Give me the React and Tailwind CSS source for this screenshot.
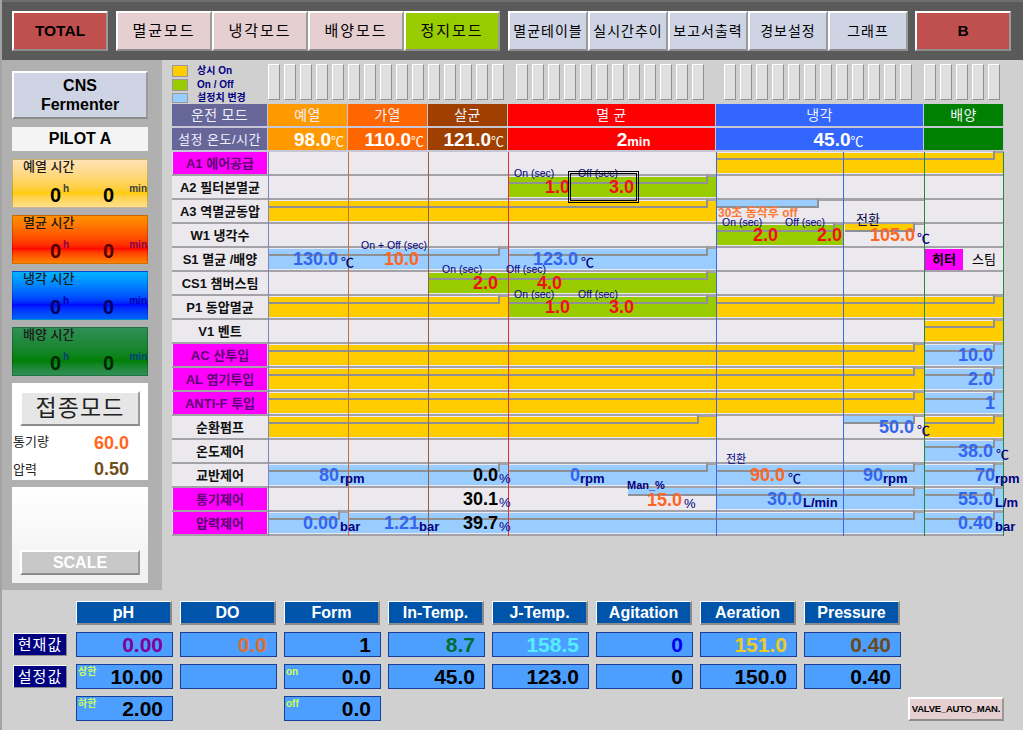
import clsx from 'clsx';

const AMBER = 'bg-[#ffcc00]';
const GREEN = 'bg-[#99cc00]';
const BLUE = 'bg-[#99ccff]';
const RAISED = 'border-2 border-t-white border-l-white border-r-[#9a9a9a] border-b-[#8c8c8c]';

// right-hand step of a process line: offset of the riser and width of the top run
const STEP = {
  8: ['right-2', 'w-2'],
  9: ['right-[9px]', 'w-[9px]'],
  17: ['right-[17px]', 'w-[17px]'],
  105: ['right-[105px]', 'w-[105px]'],
};

const Seg = ({ span, fill, strip, stripLeft = 'left-0', notch, line = false }) => {
  const step = notch ? STEP[notch] : null;
  return (
    <div className={clsx('relative h-6 border-b-2 border-[#a2a2a8] bg-[#ebe9ee]', span)}>
      {fill && <div className={clsx('absolute inset-x-0 top-px bottom-px', fill)} />}
      {strip && <div className={clsx('absolute top-0 h-1.5', stripLeft, step ? step[0] : 'right-0', strip)} />}
      {(step || line) && (
        <div className={clsx('absolute top-1.5 h-0.5 bg-[#8f8f96]', stripLeft, step ? step[0] : 'right-0')} />
      )}
      {step && (
        <>
          <div className={clsx('absolute -top-px h-[9px] w-0.5 bg-[#8f8f96]', step[0])} />
          <div className={clsx('absolute -top-px right-0 h-0.5 bg-[#a2a2a8]', step[1])} />
        </>
      )}
    </div>
  );
};

const rows = [
  { label: 'A1 에어공급', hot: true, segs: [{ span: 'col-span-4' }, { span: 'col-span-3', fill: AMBER, notch: 9 }] },
  { label: 'A2 필터본멸균', segs: [{ span: 'col-span-3' }, { span: 'col-span-1', fill: GREEN, notch: 8 }, { span: 'col-span-3' }] },
  {
    label: 'A3 역멸균동압',
    segs: [
      { span: 'col-span-4', fill: AMBER, notch: 8 },
      { span: 'col-span-2', strip: BLUE, notch: 105 },
      { span: 'col-span-1' },
    ],
  },
  {
    label: 'W1 냉각수',
    segs: [
      { span: 'col-span-4' },
      { span: 'col-span-1', fill: GREEN, notch: 8 },
      { span: 'col-span-1', strip: AMBER, stripLeft: 'left-0.5', notch: 9 },
      { span: 'col-span-1' },
    ],
  },
  {
    label: 'S1 멸균 /배양',
    heater: true,
    segs: [
      { span: 'col-span-3', fill: BLUE, notch: 8 },
      { span: 'col-span-1', fill: BLUE, notch: 8 },
      { span: 'col-span-2' },
    ],
  },
  { label: 'CS1 챔버스팀', segs: [{ span: 'col-span-2' }, { span: 'col-span-2', fill: GREEN, notch: 8 }, { span: 'col-span-3' }] },
  {
    label: 'P1 동압멸균',
    segs: [
      { span: 'col-span-3', fill: AMBER, notch: 8 },
      { span: 'col-span-1', fill: GREEN, notch: 8 },
      { span: 'col-span-3', fill: AMBER, notch: 9 },
    ],
  },
  { label: 'V1 벤트', segs: [{ span: 'col-span-6' }, { span: 'col-span-1', fill: AMBER, notch: 9 }] },
  { label: 'AC 산투입', hot: true, segs: [{ span: 'col-span-6', fill: AMBER, notch: 9 }, { span: 'col-span-1', fill: BLUE, notch: 9 }] },
  { label: 'AL 염기투입', hot: true, segs: [{ span: 'col-span-6', fill: AMBER, notch: 9 }, { span: 'col-span-1', fill: BLUE, notch: 9 }] },
  { label: 'ANTI-F 투입', hot: true, segs: [{ span: 'col-span-6', fill: AMBER, notch: 9 }, { span: 'col-span-1', fill: BLUE, notch: 9 }] },
  {
    label: '순환펌프',
    segs: [
      { span: 'col-span-4', fill: AMBER, notch: 17 },
      { span: 'col-span-1' },
      { span: 'col-span-1', strip: BLUE, notch: 9 },
      { span: 'col-span-1', fill: AMBER, notch: 9 },
    ],
  },
  { label: '온도제어', segs: [{ span: 'col-span-6' }, { span: 'col-span-1', fill: BLUE, notch: 9 }] },
  {
    label: '교반제어',
    segs: [
      { span: 'col-span-3', fill: BLUE, notch: 8 },
      { span: 'col-span-1', fill: BLUE, notch: 8 },
      { span: 'col-span-2', fill: BLUE, notch: 9 },
      { span: 'col-span-1', fill: BLUE, notch: 9 },
    ],
  },
  {
    label: '통기제어',
    hot: true,
    segs: [
      { span: 'col-span-3' },
      { span: 'col-span-1', strip: BLUE, stripLeft: 'left-[120px]' , line: true },
      { span: 'col-span-2', fill: BLUE, notch: 9 },
      { span: 'col-span-1', fill: BLUE, notch: 9 },
    ],
  },
  {
    label: '압력제어',
    hot: true,
    segs: [
      { span: 'col-span-1', fill: BLUE, notch: 8 },
      { span: 'col-span-3', fill: BLUE, line: true },
      { span: 'col-span-2', fill: BLUE, notch: 9 },
      { span: 'col-span-1', fill: BLUE, notch: 9 },
    ],
  },
];

const dividers = [
  'left-[96px] bg-[#7f84c4]',
  'left-[176px] bg-[#c4703a]',
  'left-[256px] bg-[#94603c]',
  'left-[336px] bg-[#e03030]',
  'left-[544px] bg-[#3f66e8]',
  'left-[671px] bg-[#3f66e8]',
  'left-[752px] bg-[#1f8a3c]',
  'left-[831px] bg-[#1f8a3c]',
];

const SEC = 'text-[10.5px] leading-3 text-[#000080]';
const UNIT = 'text-[13px] leading-none font-bold text-[#000080]';
const DEG = 'text-[13px] leading-none font-medium text-[#000080]';
const NUM = 'text-[18px] leading-none font-bold';
const RED = `${NUM} text-[#ee1111]`;
const SET = `${NUM} text-[#3366ee]`;
const HOT = `${NUM} text-[#ff6622]`;
const BLK = `${NUM} text-black`;

// labels and readings that sit on top of the process lines
const tags = [
  ['left-[342px] top-[63px]', SEC, 'On (sec)'],
  ['left-[406px] top-[63px]', SEC, 'Off (sec)'],
  ['left-[373px] top-[74px]', RED, '1.0'],
  ['left-[437px] top-[74px]', RED, '3.0'],
  ['left-[546px] top-[103px]', 'text-[12px] leading-none font-bold text-[#ff7733]', '30초 동작후 off'],
  ['left-[550px] top-[112px]', SEC, 'On (sec)'],
  ['left-[613px] top-[112px]', SEC, 'Off (sec)'],
  ['left-[684px] top-[109px]', 'text-[13px] leading-none text-[#000040]', '전환'],
  ['left-[581px] top-[122px]', RED, '2.0'],
  ['left-[645px] top-[122px]', RED, '2.0'],
  ['left-[698px] top-[122px]', HOT, '105.0'],
  ['left-[745px] top-[128px]', DEG, '℃'],
  ['left-[189px] top-[135px]', SEC, 'On + Off (sec)'],
  ['left-[121px] top-[146px]', SET, '130.0'],
  ['left-[169px] top-[152px]', DEG, '℃'],
  ['left-[212px] top-[146px]', HOT, '10.0'],
  ['left-[361px] top-[146px]', SET, '123.0'],
  ['left-[409px] top-[152px]', DEG, '℃'],
  ['left-[270px] top-[159px]', SEC, 'On (sec)'],
  ['left-[334px] top-[159px]', SEC, 'Off (sec)'],
  ['left-[301px] top-[170px]', RED, '2.0'],
  ['left-[365px] top-[170px]', RED, '4.0'],
  ['left-[342px] top-[184px]', SEC, 'On (sec)'],
  ['left-[406px] top-[184px]', SEC, 'Off (sec)'],
  ['left-[373px] top-[194px]', RED, '1.0'],
  ['left-[437px] top-[194px]', RED, '3.0'],
  ['left-[786px] top-[242px]', SET, '10.0'],
  ['left-[796px] top-[266px]', SET, '2.0'],
  ['left-[813px] top-[290px]', SET, '1'],
  ['left-[707px] top-[314px]', SET, '50.0'],
  ['left-[745px] top-[320px]', DEG, '℃'],
  ['left-[786px] top-[338px]', SET, '38.0'],
  ['left-[824px] top-[344px]', DEG, '℃'],
  ['left-[147px] top-[362px]', SET, '80'],
  ['left-[168px] top-[368px]', UNIT, 'rpm'],
  ['left-[301px] top-[362px]', BLK, '0.0'],
  ['left-[327px] top-[368px]', DEG, '%'],
  ['left-[398px] top-[362px]', SET, '0'],
  ['left-[408px] top-[368px]', UNIT, 'rpm'],
  ['left-[554px] top-[350px]', 'text-[11px] leading-none text-[#000080]', '전환'],
  ['left-[578px] top-[362px]', HOT, '90.0'],
  ['left-[616px] top-[368px]', DEG, '℃'],
  ['left-[691px] top-[362px]', SET, '90'],
  ['left-[711px] top-[368px]', UNIT, 'rpm'],
  ['left-[803px] top-[362px]', SET, '70'],
  ['left-[823px] top-[368px]', UNIT, 'rpm'],
  ['left-[291px] top-[386px]', BLK, '30.1'],
  ['left-[327px] top-[392px]', DEG, '%'],
  ['left-[455px] top-[376px]', 'text-[11px] leading-none font-bold text-[#000080]', 'Man_%'],
  ['left-[475px] top-[387px]', HOT, '15.0'],
  ['left-[512px] top-[393px]', DEG, '%'],
  ['left-[595px] top-[386px]', SET, '30.0'],
  ['left-[631px] top-[392px]', UNIT, 'L/min'],
  ['left-[786px] top-[386px]', SET, '55.0'],
  ['left-[823px] top-[392px]', UNIT, 'L/m'],
  ['left-[131px] top-[410px]', SET, '0.00'],
  ['left-[168px] top-[416px]', UNIT, 'bar'],
  ['left-[212px] top-[410px]', SET, '1.21'],
  ['left-[247px] top-[416px]', UNIT, 'bar'],
  ['left-[291px] top-[410px]', BLK, '39.7'],
  ['left-[327px] top-[416px]', DEG, '%'],
  ['left-[786px] top-[410px]', SET, '0.40'],
  ['left-[823px] top-[416px]', UNIT, 'bar'],
];

const timers = [
  { title: '예열 시간', bg: 'from-[#ffe2b4] via-[#ffcc00] to-[#ffe08a]', num: 'text-black', unit: 'text-[#404040]' },
  { title: '멸균 시간', bg: 'from-[#ff9000] via-[#ff0000] to-[#ff8000]', num: 'text-[#500000]', unit: 'text-[#900050]' },
  { title: '냉각 시간', bg: 'from-[#00b4ff] via-[#0000ff] to-[#0060ff]', num: 'text-[#000060]', unit: 'text-[#0000b0]' },
  { title: '배양 시간', bg: 'from-[#2f8f55] via-[#008000] to-[#2f8f55]', num: 'text-[#002800]', unit: 'text-[#004080]' },
];

const sensors = [
  { name: 'pH', cur: '0.00', curColor: 'text-[#800099]', set: '10.00', setTag: '상한' },
  { name: 'DO', cur: '0.0', curColor: 'text-[#e07030]', set: '' },
  { name: 'Form', cur: '1', curColor: 'text-black', set: '0.0', setTag: 'on' },
  { name: 'In-Temp.', cur: '8.7', curColor: 'text-[#006e33]', set: '45.0' },
  { name: 'J-Temp.', cur: '158.5', curColor: 'text-[#55eeff]', set: '123.0' },
  { name: 'Agitation', cur: '0', curColor: 'text-[#0000ee]', set: '0' },
  { name: 'Aeration', cur: '151.0', curColor: 'text-[#eecc22]', set: '150.0' },
  { name: 'Pressure', cur: '0.40', curColor: 'text-[#6b4a20]', set: '0.40' },
];

const Slots = ({ count, className }) => (
  <div className={clsx('flex gap-1', className)}>
    {Array.from({ length: count }).map((_, i) => (
      <div key={i} className="h-9 w-3 border border-t-white border-l-white border-r-[#8f8f8f] border-b-[#8f8f8f] bg-[#dfdfdf]" />
    ))}
  </div>
);

const Timer = ({ title, bg, num, unit }) => (
  <div className={clsx('relative h-[49px] w-[136px] border border-black/20 bg-linear-to-b from-0% via-70% to-100%', bg)}>
    <div className="pl-2.5 text-[13px] font-medium leading-[13px] text-[#1a1a1a]">{title}</div>
    <div className={clsx('absolute left-[37px] top-[25px] text-[20px] leading-none font-bold', num)}>0</div>
    <div className={clsx('absolute left-[50px] top-[24px] text-[10px] leading-none font-bold', unit)}>h</div>
    <div className={clsx('absolute left-[90px] top-[25px] text-[20px] leading-none font-bold', num)}>0</div>
    <div className={clsx('absolute right-0 top-[24px] text-[10px] leading-none font-bold', unit)}>min</div>
  </div>
);

const Reading = ({ value, color = 'text-black', tag }) => (
  <div className="relative flex h-[25px] w-[97px] items-center justify-end border border-[#1c3f96] bg-[#4d9fff] pr-[9px] text-[21px] font-bold leading-none">
    {tag && <span className="absolute left-px top-0.5 text-[10px] leading-none font-bold text-[#ccff55]">{tag}</span>}
    <span className={color}>{value}</span>
  </div>
);

const SideLabel = ({ children }) => (
  <div className="ml-[11px] mr-[9px] flex h-[23px] w-[54px] items-center justify-center border border-t-white border-l-white border-r-[#888] border-b-[#888] bg-[#000080] text-[15px] leading-none tracking-[1px] text-white">
    {children}
  </div>
);

export default function App() {
  return (
    <div className="h-[730px] w-[1023px] overflow-hidden border-l-2 border-[#a3a3a3] bg-[#d0d0d0] font-['Liberation_Sans','Noto_Sans_CJK_KR',sans-serif] text-black">
      {/* mode buttons */}
      <header className="-ml-0.5 flex h-[60px] items-center border-t-2 border-[#6e6e6e] bg-[#5a5a5a] pl-3">
        <button className={clsx('h-10 w-24 bg-[#c0504d] text-[15.5px] font-bold', RAISED, 'border-t-[#e6c8c8] border-l-[#e6c8c8]')}>TOTAL</button>
        <div className="ml-2 flex text-[15px] tracking-[2px]">
          {['멸균모드', '냉각모드', '배양모드'].map((m) => (
            <button key={m} className={clsx('h-10 w-24 bg-[#e6cfd1]', RAISED)}>{m}</button>
          ))}
          <button className={clsx('h-10 w-24 bg-[#99cc00]', RAISED)}>정지모드</button>
        </div>
        <div className="ml-2 flex text-[14px] tracking-[1px]">
          {['멸균테이블', '실시간추이', '보고서출력', '경보설정', '그래프'].map((m) => (
            <button key={m} className={clsx('h-10 w-20 bg-[#ced4e4]', RAISED)}>{m}</button>
          ))}
        </div>
        <button className={clsx('ml-[7px] h-10 w-24 bg-[#c0504d] text-[15.5px] font-bold', RAISED, 'border-t-[#e6c8c8] border-l-[#e6c8c8]')}>B</button>
      </header>

      <div className="flex h-[530px]">
        {/* left status column */}
        <aside className="flex h-[530px] w-40 flex-col gap-[7px] bg-[#b0b0b0] px-2.5 pt-[11px]">
          <div className={clsx('flex h-12 w-[136px] flex-col items-center justify-center bg-[#ced4e4] text-[16px] font-bold leading-[19px]', RAISED)}>
            <span>CNS</span>
            <span>Fermenter</span>
          </div>
          <div className="my-px flex h-6 w-[136px] items-center justify-center bg-[#f4f4f4] text-[16px] font-bold">PILOT A</div>
          {timers.map((t) => <Timer key={t.title} {...t} />)}
          <div className="h-[97px] w-[136px] bg-white px-px pt-2">
            <button className={clsx('ml-[7px] flex h-[35px] w-[120px] items-center justify-center bg-[#e6e6e6] text-[23px] leading-none tracking-wider text-[#222]', RAISED)}>접종모드</button>
            <div className="mt-1 grid h-[22px] grid-cols-[81px_auto] items-center text-[13px] text-[#222]">
              <span className="mb-[3px]">통기량</span>
              <span className="text-[18px] font-bold text-[#ff6622]">60.0</span>
            </div>
            <div className="mt-1 grid h-[22px] grid-cols-[81px_auto] items-center text-[13px] text-[#222]">
              <span>압력</span>
              <span className="text-[18px] font-bold text-[#705020]">0.50</span>
            </div>
          </div>
          <div className="flex h-[96px] w-[136px] items-end justify-center bg-linear-to-b from-white to-[#f0f0f0] pb-2">
            <button className={clsx('h-[25px] w-[120px] bg-[#c8c8c8] text-[16px] font-bold leading-none text-white', RAISED)}>SCALE</button>
          </div>
        </aside>

        <main className="pl-2.5 pt-1">
          {/* legend and spare indicators */}
          <div className="flex h-10">
            <div className="flex w-24 flex-col gap-0.5 pt-px text-[10px] font-bold leading-none text-[#000080]">
              <div className="flex h-3 items-center gap-[9px]"><span className={clsx('h-3 w-4 border border-[#999]', AMBER)} />상시 On</div>
              <div className="flex h-3 items-center gap-[9px]"><span className={clsx('h-3 w-4 border border-[#999]', GREEN)} />On / Off</div>
              <div className="flex h-2.5 items-center gap-[9px]"><span className={clsx('h-2.5 w-4 border border-[#999]', BLUE)} />설정치 변경</div>
            </div>
            <Slots count={15} />
            <Slots count={12} className="ml-3" />
            <Slots count={12} className="ml-5" />
            <Slots count={5} className="ml-3" />
          </div>

          {/* process table */}
          <div className="relative w-[832px]">
            <div className="grid grid-cols-[96px_80px_80px_80px_208px_127px_81px_80px] text-center">
              {[
                ['col-span-1 bg-[#666699]', '운전 모드'],
                ['col-span-1 bg-[#ff9900]', '예열'],
                ['col-span-1 bg-[#ff6600]', '가열'],
                ['col-span-1 bg-[#a04000]', '살균'],
                ['col-span-1 bg-[#ff0000]', '멸 균'],
                ['col-span-2 bg-[#3366ff]', '냉각'],
                ['col-span-1 bg-[#008000]', '배양'],
              ].map(([c, t]) => (
                <div key={t} className={clsx('flex h-6 items-center justify-center border-r border-b-2 border-[#c6c6d6] text-[14px] leading-none tracking-wide text-[#f0f0ff]', c)}>{t}</div>
              ))}
              <div className="col-span-1 flex h-6 items-center justify-center border-r border-b-2 border-[#c6c6d6] bg-[#666699] text-[13px] leading-none tracking-[0.5px] text-[#f0f0ff]">설정 온도/시간</div>
              {[
                ['col-span-1 justify-end pr-[3px] bg-[#ff9900]', '98.0', '℃'],
                ['col-span-1 justify-end pr-[3px] bg-[#ff6600]', '110.0', '℃'],
                ['col-span-1 justify-end pr-[3px] bg-[#a04000]', '121.0', '℃'],
                ['col-span-1 justify-center pl-11 bg-[#ff0000]', '2', 'min'],
                ['col-span-2 justify-center pl-[38px] bg-[#3366ff]', '45.0', '℃'],
                ['col-span-1 bg-[#008000]', '', ''],
              ].map(([c, v, u]) => (
                <div key={c} className={clsx('flex h-6 items-baseline border-r border-b-2 border-[#c6c6d6] pt-0.5 text-[19px] font-bold leading-5 text-white', c)}>
                  {v}
                  <span className={clsx('text-[13px]', u !== 'min' && 'font-normal')}>{u}</span>
                </div>
              ))}

              {rows.map((row) => (
                <div key={row.label} className="contents">
                  <div className="flex h-6 items-center justify-center border-b-2 border-[#a2a2a8] bg-[#ebe9ee] text-[13px] font-bold leading-none">
                    {row.hot ? (
                      <span className="flex h-[22px] w-[94px] items-center justify-center bg-[#ff00ff] text-[#5a0070]">{row.label}</span>
                    ) : (
                      <span className="text-[#111]">{row.label}</span>
                    )}
                  </div>
                  {row.segs.map((s, i) => <Seg key={i} {...s} />)}
                  {row.heater && (
                    <div className="col-span-1 flex h-6 gap-0.5 border-b-2 border-[#a2a2a8] bg-[#ebe9ee] pl-px pt-px text-[13px] font-bold leading-none">
                      <span className="flex h-[21px] w-[38px] items-center justify-center bg-[#ff00ff]">히터</span>
                      <span className="flex h-[21px] w-[38px] items-center justify-center font-normal">스팀</span>
                    </div>
                  )}
                </div>
              ))}
            </div>

            {dividers.map((d) => (
              <div key={d} className={clsx('absolute top-12 bottom-0 w-px', d)} />
            ))}

            {tags.map(([pos, style, text], i) => (
              <span key={i} className={clsx('absolute whitespace-nowrap', pos, style)}>{text}</span>
            ))}

            {/* selected-item frame on the filter sterilise row */}
            <div className="absolute left-[396px] top-[67px] h-[32px] w-[71px] border border-black p-px">
              <div className="h-full w-full border border-black" />
            </div>
          </div>
        </main>
      </div>

      {/* sensor readings */}
      <section className="flex flex-col gap-[7px] pt-[11px]">
        <div className="flex gap-2 pl-[74px]">
          {sensors.map((s) => (
            <div key={s.name} className="flex h-6 w-24 items-center justify-center border-t border-l border-t-white border-l-white border-r-2 border-b-2 border-r-[#8c8c8c] border-b-[#8c8c8c] bg-[#0055aa] text-[16px] font-bold leading-none text-white">
              {s.name}
            </div>
          ))}
        </div>
        <div className="flex items-center">
          <SideLabel>현재값</SideLabel>
          <div className="flex gap-[7px]">
            {sensors.map((s) => <Reading key={s.name} value={s.cur} color={s.curColor} />)}
          </div>
        </div>
        <div className="flex items-center">
          <SideLabel>설정값</SideLabel>
          <div className="flex gap-[7px]">
            {sensors.map((s) => <Reading key={s.name} value={s.set} tag={s.setTag} />)}
          </div>
        </div>
        <div className="flex items-center pl-[74px]">
          <Reading value="2.00" tag="하한" />
          <div className="ml-[111px]"><Reading value="0.0" tag="off" /></div>
          <button className={clsx('ml-[527px] h-6 w-24 bg-[#e6cfd1] text-[9.5px] font-bold leading-none tracking-tight', RAISED)}>VALVE_AUTO_MAN.</button>
        </div>
      </section>
    </div>
  );
}
